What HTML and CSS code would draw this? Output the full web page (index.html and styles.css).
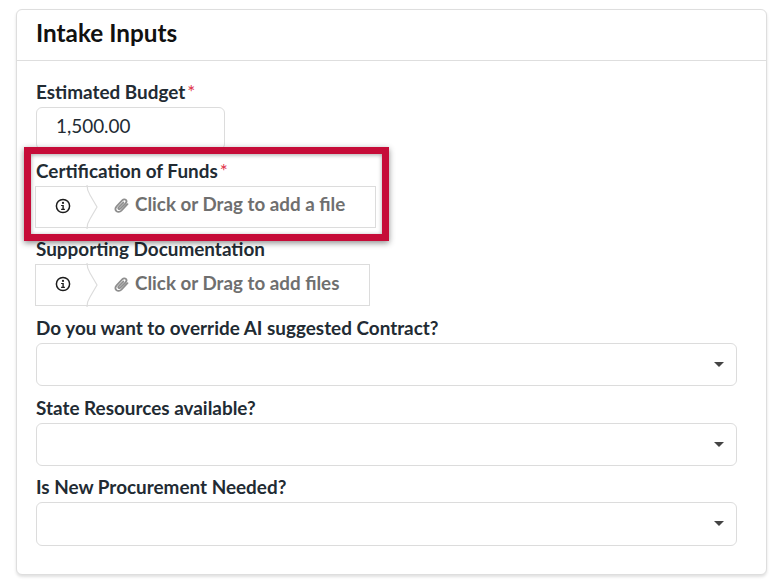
FILE: index.html
```html
<!DOCTYPE html>
<html lang="en">
<head>
<meta charset="utf-8">
<title>Intake Inputs</title>
<link rel="stylesheet" href="styles.css">
</head>
<body>
<section class="card">
  <header class="card-head"><h1 class="card-title">Intake Inputs</h1></header>
  <div class="card-body">
    <div class="field field-budget">
      <label class="label">Estimated Budget<span class="req">*</span></label>
      <div class="input">1,500.00</div>
    </div>
    <div class="field field-cert">
      <label class="label">Certification of Funds<span class="req">*</span></label>
      <div class="file file-single">
        <div class="file-info">
          <svg class="info-icon" viewBox="0 0 16 16" width="16" height="16"><circle cx="8" cy="8" r="6.6" fill="none" stroke="#1c1c1c" stroke-width="1.5"/><circle cx="8" cy="4.9" r="1.1" fill="#1c1c1c"/><path d="M6.1 6.900h2.700v3.800h1.100v1.200H6.100v-1.200h1.300V8.100H6.100z" fill="#1c1c1c"/></svg>
        </div>
        <svg class="file-arrow" viewBox="0 0 14 44" width="14" height="44"><path d="M1 0 C1 4 2 7 4 10 L11 22 L4 34 C2 37 1 40 1 44" fill="#fff" stroke="#dcdcdc" stroke-width="1.200"/></svg>
        <div class="file-drop">
          <svg class="clip-icon" viewBox="0 0 16 16" width="17" height="17"><path d="M13.600 6.800 7.900 12.800c-1.500 1.500-3.500 1.600-4.700.4s-1.100-3.100.4-4.700l5.300-5.500c1-1 2.400-1.100 3.200-.3s.7 2.200-.3 3.200l-4.900 5.100c-.5.500-1.200.6-1.600.2s-.3-1.100.2-1.600l4.200-4.400" fill="none" stroke="#8f8f8f" stroke-width="1.700" stroke-linecap="round"/></svg>
          <span>Click or Drag to add a file</span>
        </div>
      </div>
    </div>
    <div class="field field-support">
      <label class="label">Supporting Documentation</label>
      <div class="file file-multi">
        <div class="file-info">
          <svg class="info-icon" viewBox="0 0 16 16" width="16" height="16"><circle cx="8" cy="8" r="6.6" fill="none" stroke="#1c1c1c" stroke-width="1.5"/><circle cx="8" cy="4.9" r="1.1" fill="#1c1c1c"/><path d="M6.1 6.900h2.700v3.800h1.100v1.200H6.100v-1.200h1.300V8.100H6.100z" fill="#1c1c1c"/></svg>
        </div>
        <svg class="file-arrow" viewBox="0 0 14 44" width="14" height="44"><path d="M1 0 C1 4 2 7 4 10 L11 22 L4 34 C2 37 1 40 1 44" fill="#fff" stroke="#dcdcdc" stroke-width="1.200"/></svg>
        <div class="file-drop">
          <svg class="clip-icon" viewBox="0 0 16 16" width="17" height="17"><path d="M13.600 6.800 7.900 12.800c-1.500 1.500-3.500 1.600-4.700.4s-1.100-3.100.4-4.700l5.300-5.500c1-1 2.400-1.100 3.200-.3s.7 2.200-.3 3.200l-4.900 5.100c-.5.500-1.200.6-1.600.2s-.3-1.100.2-1.600l4.200-4.400" fill="none" stroke="#8f8f8f" stroke-width="1.700" stroke-linecap="round"/></svg>
          <span>Click or Drag to add files</span>
        </div>
      </div>
    </div>
    <div class="field field-select">
      <label class="label">Do you want to override AI suggested Contract?</label>
      <div class="select"><span class="caret"></span></div>
    </div>
    <div class="field field-select">
      <label class="label">State Resources available?</label>
      <div class="select"><span class="caret"></span></div>
    </div>
    <div class="field field-select field-last">
      <label class="label">Is New Procurement Needed?</label>
      <div class="select select-last"><span class="caret"></span></div>
    </div>
  </div>
</section>
<div class="highlight"></div>
</body>
</html>
```
FILE: styles.css
```css
* { box-sizing: border-box; }
html, body { margin: 0; padding: 0; background: #fff; }
body {
  width: 776px;
  height: 587px;
  overflow: hidden;
  padding: 9px 10px 0 16px;
  font-family: Lato, "Liberation Sans", sans-serif;
  color: #222b33;
  position: relative;
}
.card {
  width: 751px;
  height: 566px;
  border: 1px solid #dedede;
  border-radius: 6px;
  background: #fff;
  box-shadow: 0 2px 3px rgba(0, 0, 0, 0.12);
}
.card-head {
  height: 51px;
  border-bottom: 1px solid #dedede;
  padding: 0 19px 5px;
  display: flex;
  align-items: center;
}
.card-title {
  margin: 0;
  font-size: 24.3px;
  font-weight: 700;
  color: #111;
  line-height: 30px;
}
.card-body { padding: 19px 29px 0 19px; }
.field { display: flex; flex-direction: column; align-items: flex-start; }
.label {
  font-size: 18.9px;
  font-weight: 700;
  line-height: 24px;
  height: 27px;
  color: #222b33;
}
.req { color: #e0334a; font-weight: 400; margin-left: 2px; }
.input {
  width: 189px;
  height: 43px;
  border: 1px solid #dcdcdc;
  border-radius: 6px;
  padding: 0 19px;
  font-size: 18.9px;
  line-height: 36px;
  color: #222b33;
}
.field-budget { height: 79px; }
.field-cert { height: 78px; }
.field-support { height: 79px; }
.field-select { height: 80px; }
.field-select:nth-child(5) { height: 79px; }
.file { display: flex; height: 42px; position: relative; }
.file-single { width: 341px; margin-left: -1px; }
.file-multi { width: 335px; margin-left: -1px; }
.file-info {
  width: 52px;
  height: 42px;
  border: 1px solid #dcdcdc;
  border-right: 0;
  display: flex;
  align-items: center;
  justify-content: center;
}
.file-arrow { position: absolute; left: 51px; top: -1px; }
.file-drop {
  flex: 1;
  height: 42px;
  border: 1px solid #dcdcdc;
  border-left: 0;
  padding: 0 0 5px 26px;
  display: flex;
  align-items: center;
  gap: 5px;
  font-size: 18.8px;
  font-weight: 700;
  color: #6f6f6f;
}
.file-single .file-drop { padding-bottom: 7px; }
.clip-icon { position: relative; top: 2px; }
.info-icon { position: relative; top: -1px; left: 1px; }
.select {
  width: 701px;
  height: 43px;
  border: 1px solid #dcdcdc;
  border-radius: 6px;
  position: relative;
}
.select-last { height: 44px; }
.caret {
  position: absolute;
  right: 12px;
  top: 18px;
  border-left: 5px solid transparent;
  border-right: 5px solid transparent;
  border-top: 5px solid #444;
}
.highlight {
  position: absolute;
  left: 24px;
  top: 147px;
  width: 365px;
  height: 94px;
  border: 7px solid #c60c38;
  box-shadow: 0 2px 6px rgba(0, 0, 0, 0.45), inset 0 1px 4px rgba(0, 0, 0, 0.35);
}
```
